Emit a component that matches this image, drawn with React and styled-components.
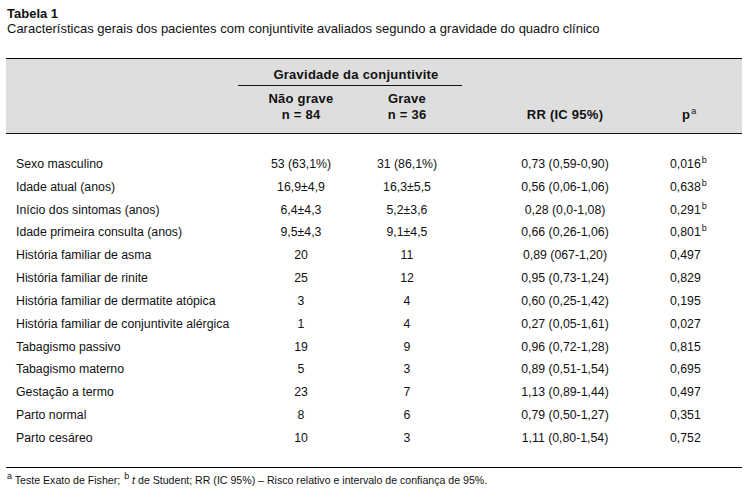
import React from "react";
import styled, { createGlobalStyle } from "styled-components";

const GlobalStyle = createGlobalStyle`
  body {
    margin: 0;
    background: #fff;
    color: #111;
    font-family: "Liberation Sans", Arial, sans-serif;
  }
`;

const COLS = "244px 102px 110px 206px 74px";

const Page = styled.div`
  width: 736px;
  padding: 6px 6px 0 6px;
`;

const Title = styled.div`
  font-size: 13px;
  font-weight: bold;
  line-height: 15px;
  padding-left: 1px;
`;

const Subtitle = styled.div`
  font-size: 13px;
  line-height: 16px;
  padding-left: 1px;
`;

const Table = styled.div`
  margin-top: 21px;
  border-top: 1.5px solid #000;
  border-bottom: 1px solid #000;
`;

const Head = styled.div`
  display: grid;
  grid-template-columns: ${COLS};
  grid-template-rows: 27px 1fr;
  background: #dedede;
  height: 75px;
  box-sizing: border-box;
  border-bottom: 1.5px solid #111;
  font-size: 13px;
  font-weight: bold;
  letter-spacing: 0.25px;
  line-height: 16px;
`;

const GroupLabel = styled.div`
  grid-column: 2 / 4;
  grid-row: 1;
  margin-left: -12px;
  padding: 8px 0 0 12px;
  box-sizing: border-box;
  border-bottom: 1px solid #111;
  text-align: center;
  line-height: 15px;
`;

const HeadCell = styled.div`
  grid-row: 2;
  grid-column: ${(p) => p.$col};
  align-self: end;
  text-align: ${(p) => p.$align || "center"};
  padding-left: ${(p) => p.$pad || 0}px;
  padding-bottom: 10px;
`;

const Body = styled.div`
  padding: 18.5px 0 17.5px;
`;

const Row = styled.div`
  display: grid;
  grid-template-columns: ${COLS};
  height: 22.83px;
  align-items: center;
  font-size: 12.3px;
`;

const Cell = styled.div`
  text-align: ${(p) => p.$align || "center"};
  padding-left: ${(p) => p.$pad || 0}px;
  white-space: nowrap;
`;

const Sup = styled.sup`
  font-size: 9px;
  font-weight: normal;
  line-height: 0;
  vertical-align: 5px;
  margin-left: 1px;
`;

const Footnote = styled.div`
  margin-top: 6px;
  font-size: 10.6px;
  line-height: 12px;
`;

const rows = [
  ["Sexo masculino", "53 (63,1%)", "31 (86,1%)", "0,73 (0,59-0,90)", "0,016", "b"],
  ["Idade atual (anos)", "16,9±4,9", "16,3±5,5", "0,56 (0,06-1,06)", "0,638", "b"],
  ["Início dos sintomas (anos)", "6,4±4,3", "5,2±3,6", "0,28 (0,0-1,08)", "0,291", "b"],
  ["Idade primeira consulta (anos)", "9,5±4,3", "9,1±4,5", "0,66 (0,26-1,06)", "0,801", "b"],
  ["História familiar de asma", "20", "11", "0,89 (067-1,20)", "0,497"],
  ["História familiar de rinite", "25", "12", "0,95 (0,73-1,24)", "0,829"],
  ["História familiar de dermatite atópica", "3", "4", "0,60 (0,25-1,42)", "0,195"],
  ["História familiar de conjuntivite alérgica", "1", "4", "0,27 (0,05-1,61)", "0,027"],
  ["Tabagismo passivo", "19", "9", "0,96 (0,72-1,28)", "0,815"],
  ["Tabagismo materno", "5", "3", "0,89 (0,51-1,54)", "0,695"],
  ["Gestação a termo", "23", "7", "1,13 (0,89-1,44)", "0,497"],
  ["Parto normal", "8", "6", "0,79 (0,50-1,27)", "0,351"],
  ["Parto cesáreo", "10", "3", "1,11 (0,80-1,54)", "0,752"],
];

export default function App() {
  return (
    <>
      <GlobalStyle />
      <Page>
        <Title>Tabela 1</Title>
        <Subtitle>
          Características gerais dos pacientes com conjuntivite avaliados segundo a gravidade do quadro clínico
        </Subtitle>

        <Table>
          <Head>
            <GroupLabel>Gravidade da conjuntivite</GroupLabel>
            <HeadCell $col={2}>Não grave<br />n = 84</HeadCell>
            <HeadCell $col={3}>Grave<br />n = 36</HeadCell>
            <HeadCell $col={4}>RR (IC 95%)</HeadCell>
            <HeadCell $col={5} $align="left" $pad={14}>
              p<Sup>a</Sup>
            </HeadCell>
          </Head>

          <Body>
            {rows.map((r) => (
              <Row key={r[0]}>
                <Cell $align="left" $pad={10}>{r[0]}</Cell>
                <Cell>{r[1]}</Cell>
                <Cell>{r[2]}</Cell>
                <Cell>{r[3]}</Cell>
                <Cell $align="left" $pad={2}>
                  {r[4]}
                  {r[5] && <Sup>{r[5]}</Sup>}
                </Cell>
              </Row>
            ))}
          </Body>
        </Table>

        <Footnote>
          <Sup>a</Sup> Teste Exato de Fisher; <Sup>b</Sup> <i>t</i> de Student; RR (IC 95%) – Risco relativo e intervalo de confiança de 95%.
        </Footnote>
      </Page>
    </>
  );
}
